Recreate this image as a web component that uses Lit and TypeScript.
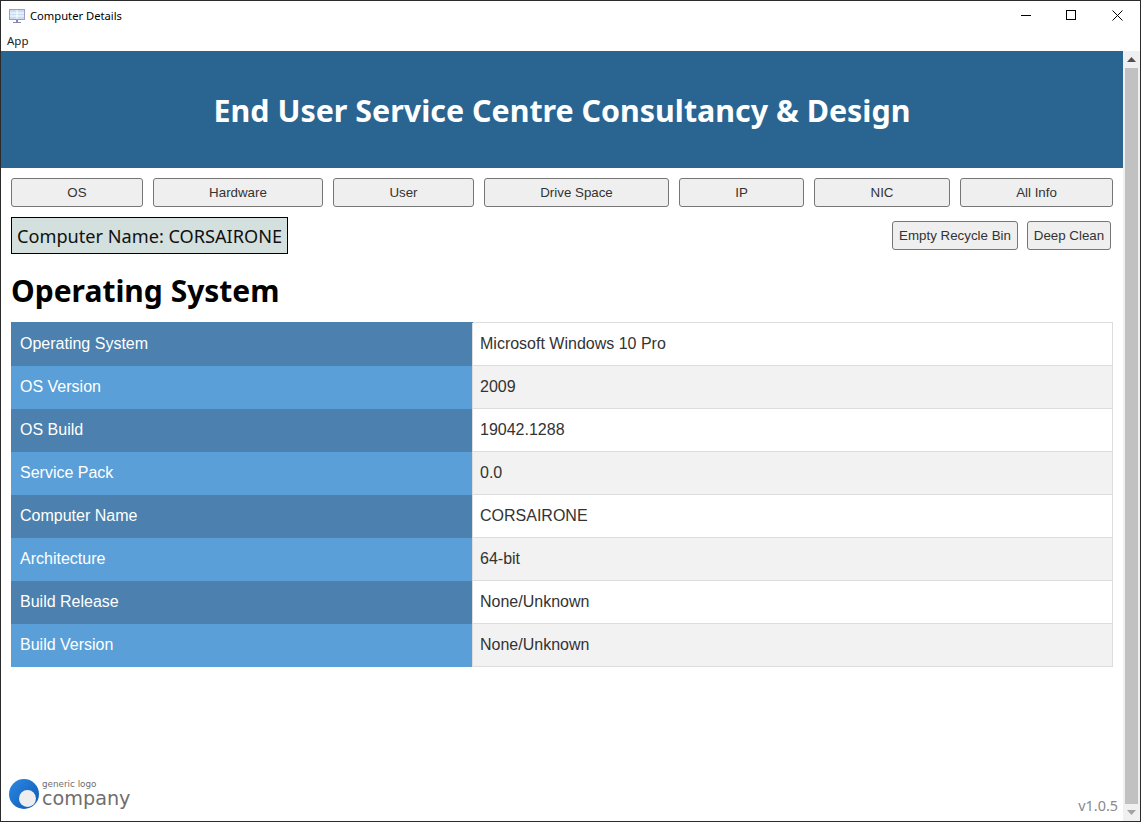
import { LitElement, html, css } from "lit";
import { customElement } from "lit/decorators.js";

const ROWS: [string, string][] = [
  ["Operating System", "Microsoft Windows 10 Pro"],
  ["OS Version", "2009"],
  ["OS Build", "19042.1288"],
  ["Service Pack", "0.0"],
  ["Computer Name", "CORSAIRONE"],
  ["Architecture", "64-bit"],
  ["Build Release", "None/Unknown"],
  ["Build Version", "None/Unknown"],
];
const NAV: [string, number][] = [
  ["OS", 132], ["Hardware", 170], ["User", 141], ["Drive Space", 185],
  ["IP", 125], ["NIC", 136], ["All Info", 153],
];

@customElement("app-root")
export class AppRoot extends LitElement {
  static styles = css`
    :host { display: block; width: 1141px; height: 822px; overflow: hidden; }
    .win { box-sizing: border-box; width: 1141px; height: 822px; border: 1px solid #2b2b2b;
      display: flex; flex-direction: column; background: #fff; font-family: "Open Sans", "Noto Sans", sans-serif; }
    .titlebar { height: 29px; flex: none; display: flex; align-items: center; padding-left: 7px; }
    .ico { margin-right: 4px; flex: none; }
    .titlebar .t { font-size: 11.2px; color: #000; font-family: "Noto Sans", sans-serif; white-space: nowrap; flex: 1; }
    .wb { width: 46px; height: 29px; display: flex; align-items: center; justify-content: center; }
    .wb.mn { width: 45px; }
    .menu { height: 21px; flex: none; padding-left: 6px; font-size: 11.5px; line-height: 21px; color: #222; font-family: "Noto Sans", sans-serif; }
    .body { flex: 1; display: flex; min-height: 0; }
    .page { flex: 1; display: flex; flex-direction: column; min-width: 0; }
    .scroll { width: 17px; flex: none; background: #f0f0f0; display: flex; flex-direction: column; align-items: center; }
    .arrow { height: 17px; flex: none; display: flex; align-items: center; justify-content: center; }
    .thumb { flex: 1; width: 13px; background: #c1c1c1; }
    .banner { box-sizing: border-box; height: 117px; padding-top: 2px; flex: none; background: #2a6592; color: #fff; display: flex; align-items: center; justify-content: center;
      font-family: "Noto Sans", sans-serif; font-weight: 700; font-size: 30.4px; }
    .content { flex: 1; padding: 10px 10px 0 10px; display: flex; flex-direction: column; position: relative; }
    .nav { display: flex; gap: 10px; }
    button { box-sizing: border-box; font-family: "Liberation Sans", Arial, sans-serif; font-size: 13.33px; color: #333; background: #efefef;
      border: 1px solid #767676; border-radius: 3px; padding: 0; }
    .nav button { height: 29px; flex: none; }
    .row2 { display: flex; align-items: center; justify-content: space-between; margin-top: 10px; }
    .cname { box-sizing: border-box; height: 37px; width: 277px; background: #d4e0de; border: 1px solid #000; color: #111;
      font-size: 18.15px; font-family: "Noto Sans", sans-serif; font-weight: 400; display: flex; align-items: center; padding-left: 5px; white-space: nowrap; }
    .acts { display: flex; gap: 9px; margin-right: 2px; }
    .acts button { height: 29px; }
    .b1 { width: 126px; } .b2 { width: 84px; }
    h1 { margin: 14px 0 9px; height: 45px; line-height: 45px; font-size: 30px; font-weight: 700; color: #000; font-family: "Noto Sans", sans-serif; }
    table { border-collapse: collapse; width: 1102px; table-layout: fixed; font-family: "Liberation Sans", Arial, sans-serif; font-size: 16px; }
    td { height: 43px; box-sizing: border-box; padding: 0 0 0 7.5px; }
    td.k { width: 461px; color: #fff; padding-left: 9px; }
    td.v { border: 1px solid #ddd; color: #333; }
    tr:nth-child(odd) td.k { background: #4c80ae; }
    tr:nth-child(even) td.k { background: #5b9fd8; }
    tr:nth-child(even) td.v { background: #f2f2f2; }
    tr:first-child td.k { border-top: 1px solid #4c80ae; }
    .logo { position: absolute; left: 8px; bottom: 12px; display: flex; align-items: flex-end; }
    .logo-txt { display: flex; flex-direction: column; margin-left: 3px; color: #6e6e6e; font-family: "DejaVu Sans", "Open Sans", sans-serif; }
    .g { font-size: 8.8px; line-height: 10px; white-space: nowrap; }
    .c { font-size: 19.2px; line-height: 20px; white-space: nowrap; }
    .ver { position: absolute; right: 5px; bottom: 6px; color: #8a8a8a; font-size: 14.4px; font-family: "Noto Sans", sans-serif; }
  `;
  render() {
    return html`<div class="win">
      <div class="titlebar">
        <svg class="ico" width="18" height="16" viewBox="0 0 18 16">
          <rect x="1.5" y="1.5" width="15" height="10" fill="#c9dcf2" stroke="#a59cc4"/>
          <path d="M2 5h14M2 8h14M9 2v9" stroke="#fff"/>
          <path d="M8 12h2v2h-2z" fill="#8d86a8"/><path d="M5 14.5h8" stroke="#8d86a8"/>
        </svg>
        <span class="t">Computer Details</span>
        <span class="wb mn"><svg width="11" height="11"><path d="M0 5.5h10" stroke="#000"/></svg></span>
        <span class="wb mn"><svg width="11" height="11"><rect x=".5" y=".5" width="9" height="9" fill="none" stroke="#000"/></svg></span>
        <span class="wb"><svg width="11" height="11"><path d="M.5 .5l10 10M10.5 .5l-10 10" stroke="#000"/></svg></span>
      </div>
      <div class="menu">App</div>
      <div class="body">
        <div class="page">
          <div class="banner">End User Service Centre Consultancy &amp; Design</div>
          <div class="content">
            <div class="nav">
              ${NAV.map(([n, w]) => html`<button style="width:${w}px">${n}</button>`)}
            </div>
            <div class="row2">
              <div class="cname">Computer Name: CORSAIRONE</div>
              <div class="acts"><button class="b1">Empty Recycle Bin</button><button class="b2">Deep Clean</button></div>
            </div>
            <h1>Operating System</h1>
            <table>${ROWS.map(([k, v]) => html`<tr><td class="k">${k}</td><td class="v">${v}</td></tr>`)}</table>
            <div class="logo">
              <svg width="30" height="30" viewBox="0 0 30 30">
                <defs><linearGradient id="lg" x1="0" y1="0" x2="1" y2="1"><stop offset="0" stop-color="#2a8ae6"/><stop offset="1" stop-color="#1057b0"/></linearGradient></defs>
                <circle cx="15" cy="15" r="15" fill="url(#lg)"/>
                <circle cx="18.5" cy="19.5" r="8.5" fill="#eeeef0"/>
              </svg>
              <div class="logo-txt"><span class="g">generic logo</span><span class="c">company</span></div>
            </div>
            <div class="ver">v1.0.5</div>
          </div>
        </div>
        <div class="scroll">
          <div class="arrow"><svg width="9" height="5"><path d="M4.5 0L9 5H0z" fill="#505050"/></svg></div>
          <div class="thumb"></div>
          <div class="arrow"><svg width="9" height="5"><path d="M0 0h9L4.5 5z" fill="#a3a3a3"/></svg></div>
        </div>
      </div>
    </div>`;
  }
}
